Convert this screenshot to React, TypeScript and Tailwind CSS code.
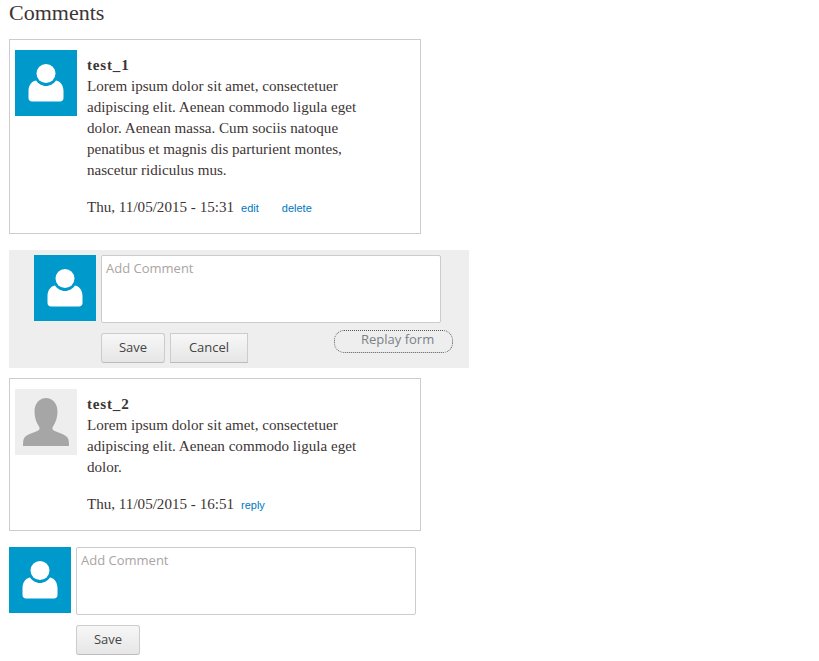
const serif = "font-['Liberation_Serif',serif]";

function BlueUser() {
  return (
    <div className="w-[62px] h-[66px] bg-[#0099cc] shrink-0 flex items-center justify-center">
      <svg width="36" height="40" viewBox="0 0 36 40" fill="#ffffff">
        <circle cx="18" cy="10.500" r="9.500" />
        <path d="M8 17.500c2 3 6 5.500 10 5.500s8-2.500 10-5.500c5 1 7.500 5.500 7.500 10.500v7c0 2-1.500 3.500-3.500 3.500H4c-2 0-3.500-1.500-3.500-3.500v-7C.5 23 3 18.500 8 17.500z" />
      </svg>
    </div>
  );
}

function GrayUser() {
  return (
    <div className="w-[62px] h-[66px] bg-[#eeeeee] shrink-0 flex items-center justify-center">
      <svg width="46" height="48" viewBox="0 0 46 48" fill="#a6a6a6">
        <path d="M23 0c6.500 0 11.500 5.500 11.500 13.500 0 6-2 11.500-4.500 15-1 1.300-.8 3 .8 4 4 2.300 10.700 3.500 13.700 7 1.200 1.500 1.500 4.500 1.500 8.500H0c0-4 .3-7 1.500-8.500 3-3.500 9.700-4.700 13.700-7 1.600-1 1.800-2.700.8-4-2.500-3.500-4.500-9-4.500-15C11.500 5.500 16.500 0 23 0z" />
      </svg>
    </div>
  );
}

function Button({ label, width, square }: { label: string; width: string; square?: boolean }) {
  return (
    <button
      className={`${width} h-[30px] border border-[#cccccc] border-b-[#bbbbbb] bg-gradient-to-b from-[#f7f7f7] to-[#e6e6e6] text-[13px] text-[#444444] font-['Open_Sans',sans-serif] ${
        square ? "" : "rounded-[3px]"
      }`}
    >
      {label}
    </button>
  );
}

function CommentBox({ width }: { width: string }) {
  return (
    <div
      className={`${width} h-[68px] bg-white border border-[#cccccc] rounded-[2px] px-[4px] py-[3px] text-[13px] leading-[18px] text-[#aaa4a2] font-medium font-['Open_Sans',sans-serif]`}
    >
      Add Comment
    </div>
  );
}

function Comment({
  name,
  lines,
  date,
  avatar,
  links,
  height,
}: {
  name: string;
  lines: string[];
  date: string;
  avatar: React.ReactNode;
  links: React.ReactNode;
  height: string;
}) {
  return (
    <div className={`ml-[9px] w-[412px] ${height} border border-[#cccccc] bg-white pt-[10px] pl-[5px] flex`}>
      {avatar}
      <div className={`ml-[10px] pt-[5px] ${serif} text-[#3d3535] text-[15.100px] leading-[21px]`}>
        <div className="font-bold tracking-[0.8px]">{name}</div>
        {lines.map((line) => (
          <div key={line} className="whitespace-nowrap">
            {line}
          </div>
        ))}
        <div className="mt-[16px] flex items-baseline whitespace-nowrap">
          <span>{date}</span>
          {links}
        </div>
      </div>
    </div>
  );
}

const linkClass = "text-[11px] text-[#0077c0] font-['Liberation_Sans',sans-serif]";

export default function App() {
  return (
    <div className="w-[819px] h-[661px] bg-white overflow-hidden">
      <h2 className={`pl-[9px] h-[39px] pt-[1px] text-[22px] leading-[24px] text-[#3d3535] ${serif}`}>Comments</h2>

      <Comment
        name="test_1"
        height="h-[195px]"
        avatar={<BlueUser />}
        lines={[
          "Lorem ipsum dolor sit amet, consectetuer",
          "adipiscing elit. Aenean commodo ligula eget",
          "dolor. Aenean massa. Cum sociis natoque",
          "penatibus et magnis dis parturient montes,",
          "nascetur ridiculus mus.",
        ]}
        date="Thu, 11/05/2015 - 15:31"
        links={
          <>
            <a className={`${linkClass} ml-[7px]`}>edit</a>
            <a className={`${linkClass} ml-[23px]`}>delete</a>
          </>
        }
      />

      <div className="ml-[9px] mt-[16px] w-[460px] h-[118px] bg-[#eeeeee] pt-[5px] pl-[25px] flex gap-[5px]">
        <BlueUser />
        <div className="relative">
          <CommentBox width="w-[340px]" />
          <div className="mt-[10px] flex gap-[5px]">
            <Button label="Save" width="w-[64px]" />
            <Button label="Cancel" width="w-[78px]" square />
          </div>
          <div className="absolute left-[233px] top-[75px] w-[119px] h-[23px] border border-dotted border-[#555555] rounded-[10px] text-[13px] leading-[17px] text-[#7a8288] pl-[26px] font-['Open_Sans',sans-serif]">
            Replay form
          </div>
        </div>
      </div>

      <div className="mt-[10px]">
        <Comment
          name="test_2"
          height="h-[153px]"
          avatar={<GrayUser />}
          lines={[
            "Lorem ipsum dolor sit amet, consectetuer",
            "adipiscing elit. Aenean commodo ligula eget",
            "dolor.",
          ]}
          date="Thu, 11/05/2015 - 16:51"
          links={<a className={`${linkClass} ml-[7px]`}>reply</a>}
        />
      </div>

      <div className="ml-[9px] mt-[16px] flex gap-[5px]">
        <BlueUser />
        <div>
          <CommentBox width="w-[340px]" />
          <div className="mt-[10px]">
            <Button label="Save" width="w-[64px]" />
          </div>
        </div>
      </div>
    </div>
  );
}
